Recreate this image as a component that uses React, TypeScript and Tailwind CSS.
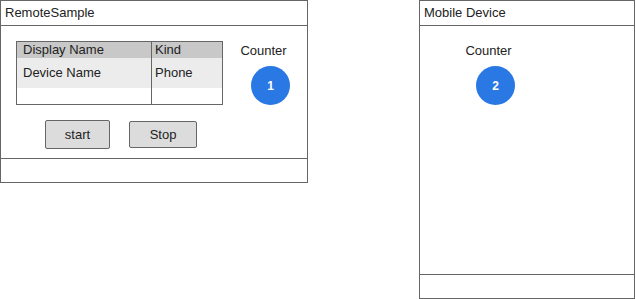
import React from 'react';

const font = { fontFamily: '"Liberation Sans", Arial, sans-serif' };

const Counter = ({ value, className }: { value: number; className?: string }) => (
  <div className={`flex flex-col items-center ${className ?? ''}`}>
    <span className="text-[13px] leading-none text-[#222]">Counter</span>
    <div className="mt-[9px] ml-[14px] flex h-[39px] w-[39px] items-center justify-center rounded-full bg-[#2a78e4] text-[12px] font-bold text-white">
      {value}
    </div>
  </div>
);

const Window = ({
  title,
  className,
  bodyHeight,
  children
}: {
  title: string;
  className: string;
  bodyHeight: string;
  children?: React.ReactNode;
}) => (
  <div className={`flex flex-col border border-[#666] bg-white ${className}`}>
    <div className="flex h-[25px] items-center border-b border-[#666] pl-[4px] text-[13px] text-[#222]">
      {title}
    </div>
    <div className={`border-b border-[#666] ${bodyHeight}`}>{children}</div>
    <div className="h-[23px]" />
  </div>
);

const App = () => {
  return (
    <div className="flex h-[299px] w-[636px] items-start bg-white" style={font}>
      <Window title="RemoteSample" className="w-[308px]" bodyHeight="h-[133px]">
        <div className="flex pl-[15px] pt-[15px]">
          <div className="flex w-[207px] border border-[#666] text-[13px] text-[#222]">
            <div className="flex w-[135px] flex-col border-r border-[#666]">
              <div className="flex h-[16px] items-center bg-[#c8c8c8] pl-[6px]">Display Name</div>
              <div className="flex h-[30px] items-center bg-[#ececec] pl-[6px]">Device Name</div>
              <div className="h-[16px]" />
            </div>
            <div className="flex flex-1 flex-col">
              <div className="flex h-[16px] items-center bg-[#c8c8c8] pl-[3px]">Kind</div>
              <div className="flex h-[30px] items-center bg-[#ececec] pl-[3px]">Phone</div>
              <div className="h-[16px]" />
            </div>
          </div>
          <Counter value={1} className="ml-[14px] mt-[3px]" />
        </div>
        <div className="flex items-start pl-[44px] pt-[15px] text-[13px] text-[#222]">
          <button className="h-[29px] w-[65px] rounded-[2px] border border-[#666] bg-[#dcdcdc]">start</button>
          <button className="ml-[19px] mt-[1px] h-[27px] w-[68px] rounded-[2px] border border-[#666] bg-[#dcdcdc]">
            Stop
          </button>
        </div>
      </Window>
      <Window title="Mobile Device" className="ml-[111px] w-[216px]" bodyHeight="h-[249px]">
        <Counter value={2} className="ml-[42px] mt-[18px] w-fit" />
      </Window>
    </div>
  );
};

export default App;
